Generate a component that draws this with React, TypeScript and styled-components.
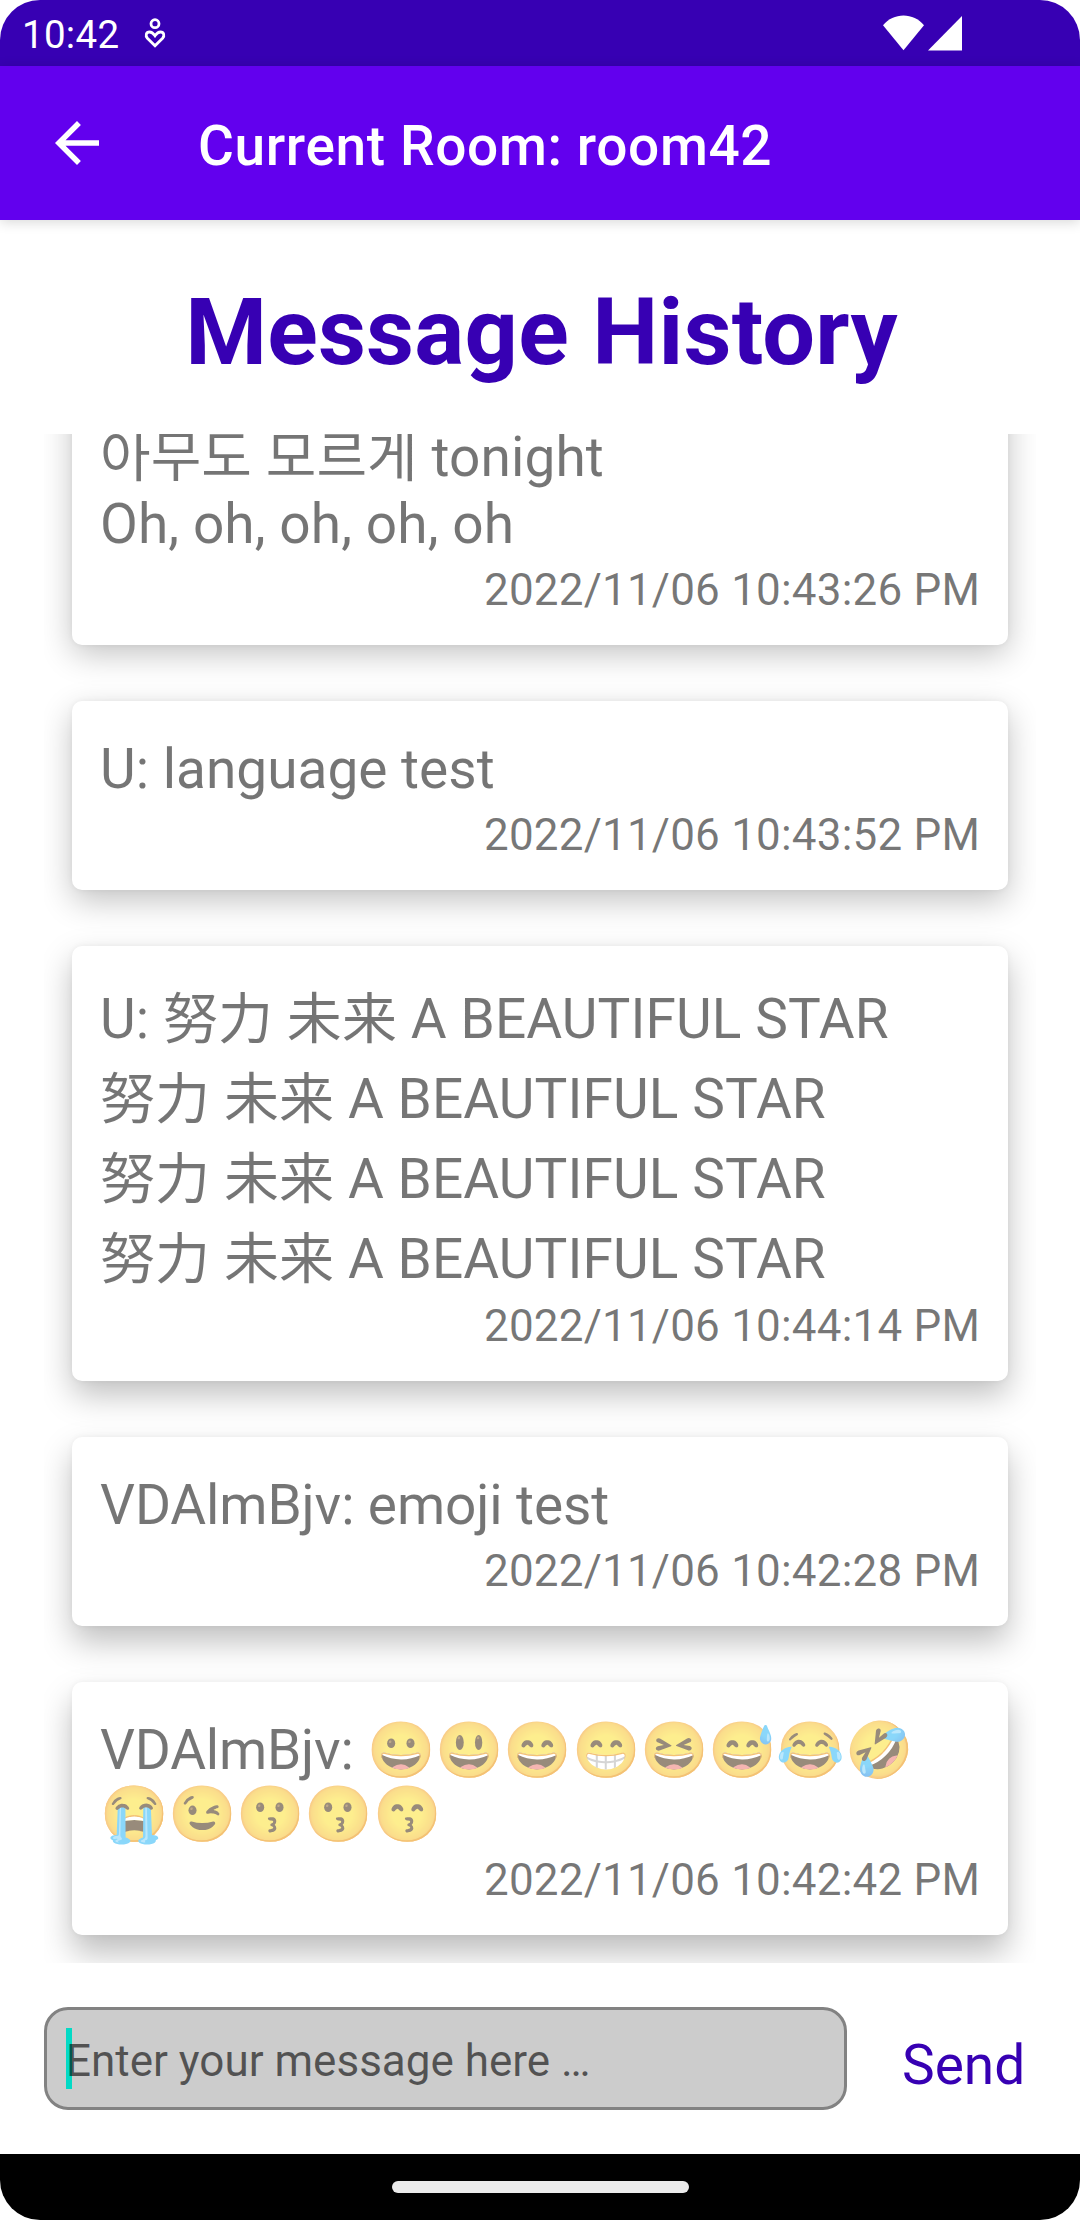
import React from 'react';
import styled, { createGlobalStyle } from 'styled-components';

const GlobalStyle = createGlobalStyle`
  * { box-sizing: border-box; }
  body { margin: 0; background: #fff; }
`;

const Screen = styled.div`
  width: 1080px;
  height: 2220px;
  display: flex;
  flex-direction: column;
  overflow: hidden;
  border-radius: 40px;
  background: #fff;
  font-family: Roboto, 'Noto Sans CJK KR', 'Noto Color Emoji', sans-serif;
`;

const StatusBar = styled.div`
  flex: none;
  height: 66px;
  padding: 0 118px 0 22px;
  display: flex;
  align-items: center;
  background: #3700b3;
  color: #fff;
`;

const Clock = styled.span`
  font-size: 38.5px;
  line-height: 46px;
  padding-top: 3px;
  letter-spacing: 0.3px;
`;

const StatusGlyph = styled.svg`
  flex: none;
  margin-left: 24px;
`;

const StatusIcons = styled.div`
  margin-left: auto;
  display: flex;
  gap: 4px;
`;

const AppBar = styled.header`
  flex: none;
  height: 154px;
  padding-left: 44px;
  display: flex;
  align-items: center;
  gap: 88px;
  background: #6200ee;
  color: #fff;
  box-shadow: 0 2px 12px rgba(0, 0, 0, 0.16);
`;

const AppTitle = styled.h1`
  margin: 0;
  padding-top: 6px;
  font-size: 55px;
  line-height: 64px;
  font-weight: 500;
  letter-spacing: 0.63px;
`;

const Heading = styled.h2`
  flex: none;
  height: 214px;
  margin: 0;
  padding: 57px 0 0 3px;
  text-align: center;
  font-size: 93.5px;
  line-height: 110px;
  font-weight: 700;
  letter-spacing: 0.2px;
  color: #3700b3;
`;

const MessageList = styled.main`
  flex: none;
  height: 1529px;
  margin: 0 44px;
  padding: 0 28px 28px;
  display: flex;
  flex-direction: column;
  justify-content: flex-end;
  gap: 56px;
  overflow: hidden;
`;

const Card = styled.article<{ $top: number; $drop: number; $shade: number }>`
  flex: none;
  padding: ${(p) => p.$top}px 28px 29px;
  border-radius: 10px;
  background: #fff;
  color: rgba(0, 0, 0, 0.54);
  box-shadow: 0 ${(p) => p.$drop}px 32px rgba(0, 0, 0, ${(p) => p.$shade}),
    0 0 6px rgba(0, 0, 0, 0.05);
`;

const Body = styled.p<{ $gap: number; $tracking: number }>`
  margin: 0 0 ${(p) => p.$gap}px;
  font-size: 55px;
  letter-spacing: ${(p) => p.$tracking}px;
`;

const Line = styled.span<{ $line: number }>`
  display: block;
  height: ${(p) => p.$line}px;
  line-height: ${(p) => p.$line}px;
  white-space: pre;
`;

const Stamp = styled.time`
  display: block;
  text-align: right;
  font-size: 44px;
  line-height: 52px;
  letter-spacing: 0.19px;
`;

const Composer = styled.footer`
  flex: 1;
  padding: 44px 0 44px 44px;
  display: flex;
  align-items: center;
`;

const Field = styled.div`
  width: 803px;
  height: 103px;
  padding-left: 19px;
  display: flex;
  align-items: center;
  border: 3px solid #828282;
  border-radius: 24px;
  background: #ccc;
`;

const Caret = styled.i`
  width: 6px;
  height: 61px;
  margin-right: -6px;
  background: #03dac5;
`;

const Placeholder = styled.span`
  padding-top: 4px;
  font-size: 44px;
  line-height: 52px;
  color: rgba(0, 0, 0, 0.6);
  z-index: 1;
`;

const SendButton = styled.button`
  margin: 0 0 0 55px;
  padding: 12px 0 0;
  border: 0;
  background: none;
  font: 400 55px/64px Roboto, sans-serif;
  color: #3700b3;
`;

const NavBar = styled.nav`
  flex: none;
  height: 66px;
  display: flex;
  align-items: center;
  justify-content: center;
  background: #000;
`;

const HomePill = styled.span`
  width: 297px;
  height: 12px;
  border-radius: 6px;
  background: #ebebeb;
`;

interface Message {
  lines: string[];
  time: string;
  line: number;
  top: number;
  gap: number;
  drop: number;
  shade: number;
  tracking: number;
}

const star = '努力 未来 A BEAUTIFUL STAR';

const messages: Message[] = [
  { lines: ['아무도 모르게 tonight', 'Oh, oh, oh, oh, oh'], time: '2022/11/06 10:43:26 PM', line: 67, top: 36, gap: 6, drop: 9, shade: 0.24, tracking: 0.08 },
  { lines: ['U: language test'], time: '2022/11/06 10:43:52 PM', line: 64, top: 36, gap: 8, drop: 11, shade: 0.24, tracking: 0 },
  { lines: ['U: ' + star, star, star, star], time: '2022/11/06 10:44:14 PM', line: 80, top: 33, gap: 1, drop: 14, shade: 0.25, tracking: 0.1 },
  { lines: ['VDAlmBjv: emoji test'], time: '2022/11/06 10:42:28 PM', line: 64, top: 36, gap: 8, drop: 16, shade: 0.25, tracking: -0.12 },
  { lines: ['VDAlmBjv: 😀😃😄😁😆😅😂🤣', '😭😉😗😗😙'], time: '2022/11/06 10:42:42 PM', line: 64, top: 36, gap: 8, drop: 18, shade: 0.26, tracking: -0.2 },
];

export default function App() {
  return (
    <>
      <GlobalStyle />
      <Screen>
        <StatusBar>
          <Clock>10:42</Clock>
          <StatusGlyph width="24" height="34" viewBox="0 0 24 34" fill="none" stroke="#fff" strokeWidth="2.8">
            <circle cx="12" cy="7.7" r="4" />
            <path d="M12 29.8 L4.4 22.2 C2.2 19.8 3 16 6.6 16 C9 16 10.4 17.6 12 19.8 C13.6 17.6 15 16 17.4 16 C21 16 21.8 19.8 19.6 22.2 Z" />
          </StatusGlyph>
          <StatusIcons>
            <svg width="41" height="36" viewBox="0 0 41 36" fill="#fff">
              <path d="M0 10.2 C5.4 4 12.6 0.6 20.5 0.6 C28.4 0.6 35.6 4 41 10.2 L20.5 35.2 Z" />
            </svg>
            <svg width="34" height="36" viewBox="0 0 34 36" fill="#fff">
              <path d="M34 1 V35.6 H0 Z" />
            </svg>
          </StatusIcons>
        </StatusBar>
        <AppBar>
          <svg width="66" height="66" viewBox="0 0 24 24" fill="#fff">
            <path d="M20 11H7.83l5.59-5.59L12 4l-8 8 8 8 1.41-1.41L7.83 13H20v-2z" />
          </svg>
          <AppTitle>Current Room: room42</AppTitle>
        </AppBar>
        <Heading>Message History</Heading>
        <MessageList>
          {messages.map((m) => (
            <Card key={m.time} $top={m.top} $drop={m.drop} $shade={m.shade}>
              <Body $gap={m.gap} $tracking={m.tracking}>
                {m.lines.map((text, i) => (
                  <Line key={i} $line={m.line}>{text}</Line>
                ))}
              </Body>
              <Stamp>{m.time}</Stamp>
            </Card>
          ))}
        </MessageList>
        <Composer>
          <Field>
            <Caret />
            <Placeholder>Enter your message here …</Placeholder>
          </Field>
          <SendButton>Send</SendButton>
        </Composer>
        <NavBar>
          <HomePill />
        </NavBar>
      </Screen>
    </>
  );
}
